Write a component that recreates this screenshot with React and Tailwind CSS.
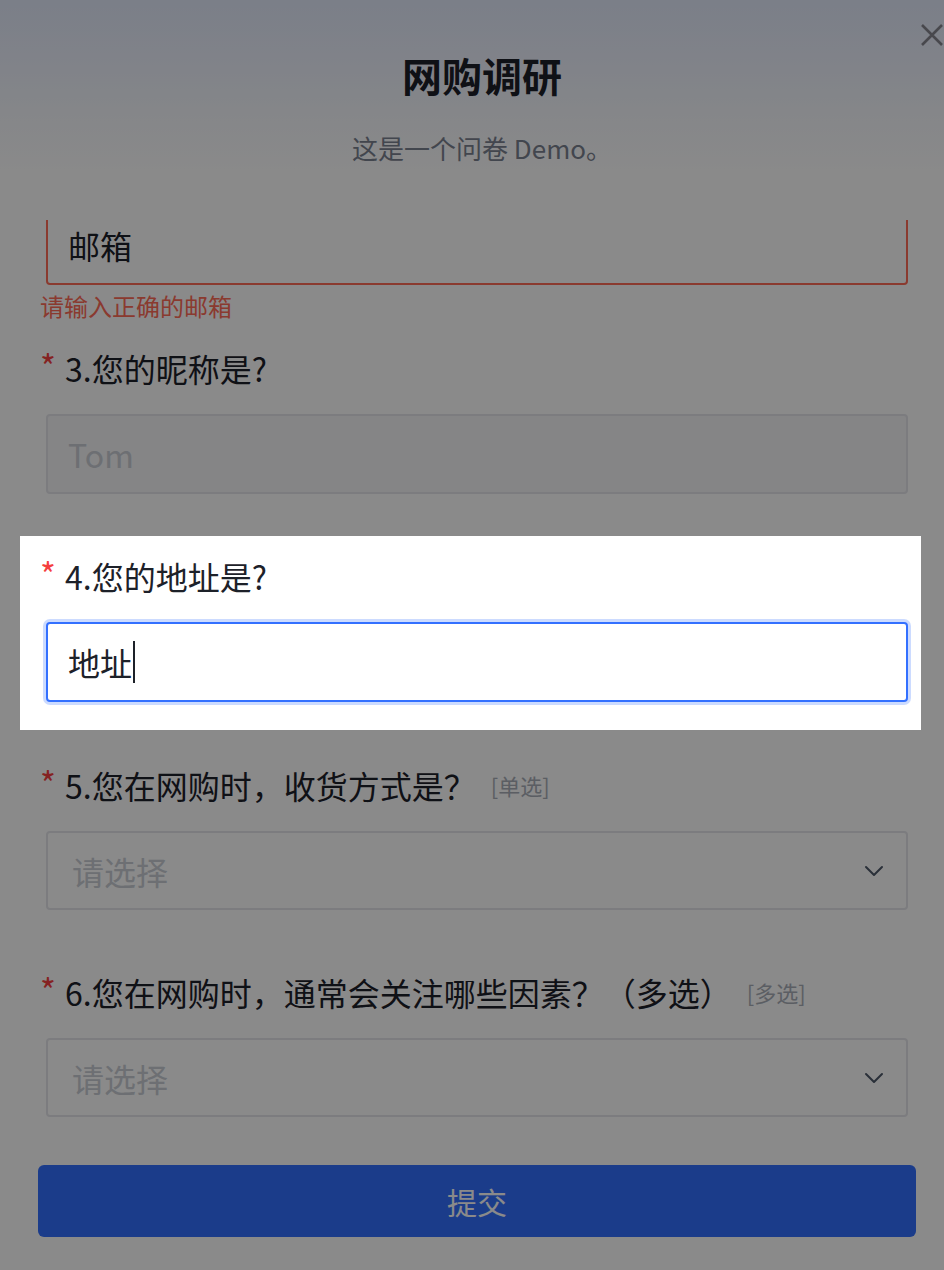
import React from "react";
import { ChevronDown } from "lucide-react";

function Label({ num, text, tag }) {
  return (
    <div className="flex items-center h-[48px] pl-[20px]">
      <span className="w-[25px] text-[34px] leading-[48px] text-[#f53f3f] -mt-[4px]">*</span>
      <span className="text-[32px] leading-[48px] text-[#1d2129]">
        {num}.{text}
      </span>
      {tag && (
        <span className="ml-[15px] text-[22px] leading-[48px] text-[#a9aeb8]">
          [{tag}]
        </span>
      )}
    </div>
  );
}

function SelectBox() {
  return (
    <div className="ml-[26px] mr-[13px] h-[79px] mt-[22px] flex items-center justify-between rounded-[4px] border-2 border-[#e5e6eb] bg-white pl-[24px] pr-[16px]">
      <span className="text-[32px] text-[#c9cdd4]">请选择</span>
      <ChevronDown size={32} strokeWidth={1.5} className="text-[#4e5969]" />
    </div>
  );
}

export default function App() {
  return (
    <div className="relative h-[1270px] w-[944px] overflow-hidden bg-[linear-gradient(180deg,#e3eafc_0px,#ffffff_170px)] font-['Noto_Sans_CJK_SC','Noto_Sans',sans-serif]">
      {/* header */}
      <header className="h-[220px] pl-[20px] text-center">
        <h1 className="pt-[47px] text-[40px] font-semibold leading-[56px] text-[#1d2129]">网购调研</h1>
        <p className="mt-[25px] text-[26px] leading-[40px] text-[#7b8290]">这是一个问卷 Demo。</p>
      </header>
      <button className="absolute right-[1px] top-[24px] text-[#86868f]">
        <svg width="22" height="22" viewBox="0 0 22 22" fill="none" stroke="currentColor" strokeWidth="2.6">
          <path d="M1 1 21 21M21 1 1 21" />
        </svg>
      </button>

      {/* scrolled form */}
      <div className="h-[1050px] overflow-hidden">
        <div className="-mt-[15px]">
          <div className="ml-[46px] mr-[36px] flex h-[80px] items-center rounded-[4px] border-2 border-[#ff6b57] bg-white pl-[20px]">
            <span className="text-[32px] text-[#1d2129]">邮箱</span>
          </div>
          <p className="mt-[3px] pl-[40px] text-[24px] leading-[36px] text-[#ff6b57]">请输入正确的邮箱</p>

          {/* Q3 */}
          <div className="ml-[20px] mr-[23px] mt-[20px]">
            <Label num="3" text="您的昵称是?" />
            <div className="ml-[26px] mr-[13px] mt-[22px] flex h-[80px] items-center rounded-[4px] border-2 border-[#e5e6eb] bg-[#f5f6f8] pl-[20px]">
              <span className="text-[32px] text-[#c9cdd4]">Tom</span>
            </div>
          </div>

          {/* Q4 highlighted */}
          <div className="relative z-20 ml-[20px] mr-[23px] mt-[42px] bg-white pt-[16px] pb-[28px]">
            <Label num="4" text="您的地址是?" />
            <div className="ml-[26px] mr-[13px] mt-[22px] flex h-[80px] items-center rounded-[4px] border-2 border-[#3370ff] bg-white pl-[20px] shadow-[0_0_0_3px_rgba(51,112,255,0.25)]">
              <span className="text-[32px] text-[#1d2129]">地址</span>
              <span className="ml-[1px] inline-block h-[42px] w-[2px] bg-[#1d2129]" />
            </div>
          </div>

          {/* Q5 */}
          <div className="ml-[20px] mr-[23px] mt-[31px]">
            <Label num="5" text="您在网购时，收货方式是？" tag="单选" />
            <SelectBox />
          </div>

          {/* Q6 */}
          <div className="ml-[20px] mr-[23px] mt-[58px]">
            <Label num="6" text="您在网购时，通常会关注哪些因素？（多选）" tag="多选" />
            <SelectBox />
          </div>

          <button className="ml-[38px] mt-[48px] flex h-[72px] w-[878px] items-center justify-center rounded-[6px] bg-[#3370ff] text-[30px] text-white">
            提交
          </button>
        </div>
      </div>

      {/* tour mask */}
      <div className="fixed inset-0 z-10 bg-[rgba(0,0,0,0.46)]" />
    </div>
  );
}
